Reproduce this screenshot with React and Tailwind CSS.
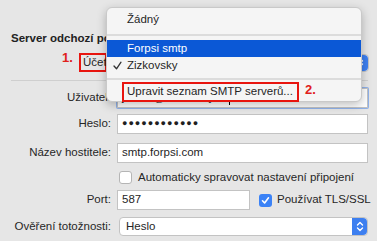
import React from "react";

const font = { fontFamily: '"Liberation Sans", Arial, sans-serif' };

const Label = ({ children }) => (
  <div className="w-[100px] shrink-0 text-right whitespace-nowrap">{children}</div>
);

const Field = ({ children, className = "" }) => (
  <div
    className={`h-[20px] border border-[#c3c3c3] bg-white px-[4px] flex items-center text-[#1f1f1f] whitespace-nowrap overflow-hidden ${className}`}
  >
    {children}
  </div>
);

const Chevron = () => (
  <svg width="8" height="11" viewBox="0 0 8 11" fill="none" stroke="white" strokeWidth="1.4" strokeLinecap="round" strokeLinejoin="round">
    <path d="M1.5 4 L4 1.5 L6.5 4" />
    <path d="M1.5 7 L4 9.5 L6.5 7" />
  </svg>
);

export default function App() {
  return (
    <div
      className="relative w-[377px] h-[241px] overflow-hidden bg-[#e6e6e6] text-[11.5px] text-[#262626]"
      style={font}
    >
      {/* form */}
      <div className="pl-[11px] pt-[31px]">
        <div className="font-bold text-[#222] leading-[14px]">Server odchozí pošty:</div>

        <div className="mt-[8px] flex items-center h-[19px]">
          <div className="w-[96px] shrink-0 flex justify-end">
            <span className="relative">
              <span className="absolute left-[-17px] top-[-5px] text-[13px] font-bold text-[#e0201b]">1.</span>
              <span className="border-2 border-[#e8150f] pl-[2px] inline-block h-[19px] leading-[15px] w-[28px] whitespace-nowrap">Účet:</span>
            </span>
          </div>
          <div className="ml-[10px] w-[252px] h-[18px] rounded-[4px] bg-white border border-[#c3c3c3] flex justify-end">
            <div className="w-[16px] h-full rounded-r-[4px] bg-[#3d7ff0] flex items-center justify-center">
              <Chevron />
            </div>
          </div>
        </div>

        <div className="mt-[8px] mr-[9px] h-px bg-[#cfcfcf]" />

        <div className="flex flex-col">
          <div className="mt-[6px] flex items-center">
            <Label>Uživatel:</Label>
            <div className="ml-[5px] w-[253px] rounded-[2px] p-[1px] bg-[#8fb1ea]">
              <Field className="border-[#9cb8e8]">
                <span>jmeno@zizkovsky.cz</span>
                <span className="ml-[1px] w-px h-[13px] bg-black" />
              </Field>
            </div>
          </div>

          <div className="mt-[5px] flex items-center">
            <Label>Heslo:</Label>
            <Field className="ml-[6px] w-[251px] tracking-[1px] text-[9px]">●●●●●●●●●●●●</Field>
          </div>

          <div className="mt-[9px] flex items-center">
            <Label>Název hostitele:</Label>
            <Field className="ml-[6px] w-[251px]">smtp.forpsi.com</Field>
          </div>

          <div className="mt-[8px] ml-[108px] flex items-center h-[13px]">
            <div className="w-[13px] h-[13px] rounded-[3px] border border-[#b5b5b5] bg-white" />
            <span className="ml-[6px] whitespace-nowrap">Automaticky spravovat nastavení připojení</span>
          </div>

          <div className="mt-[6px] flex items-center">
            <Label>Port:</Label>
            <Field className="ml-[6px] w-[133px]">587</Field>
            <div className="ml-[9px] w-[13px] h-[13px] rounded-[3px] bg-[#3b82f6] flex items-center justify-center">
              <svg width="9" height="9" viewBox="0 0 9 9" fill="none" stroke="white" strokeWidth="1.6" strokeLinecap="round" strokeLinejoin="round">
                <path d="M1.5 4.8 L3.6 7 L7.5 1.8" />
              </svg>
            </div>
            <span className="ml-[5px] whitespace-nowrap">Používat TLS/SSL</span>
          </div>

          <div className="mt-[7px] flex items-center">
            <Label>Ověření totožnosti:</Label>
            <div className="ml-[8px] w-[249px] h-[19px] rounded-[4px] bg-white border border-[#c3c3c3] flex items-center justify-between">
              <span className="pl-[6px]">Heslo</span>
              <div className="w-[15px] h-full rounded-r-[4px] bg-[#3d7ff0] flex items-center justify-center">
                <Chevron />
              </div>
            </div>
          </div>
        </div>
      </div>

      {/* popup menu */}
      <div className="absolute left-[106px] top-[7px] w-[256px] h-[95px] rounded-[6px] bg-[#f5f5f5] border border-[#c9c9c9] shadow-[0_3px_10px_rgba(0,0,0,0.25)] pt-[2px]">
        <div className="h-[20px] flex items-center pl-[20px]">Žádný</div>
        <div className="mt-[4px] h-[2px] bg-[#dcdcdc]" />
        <div className="mt-[4px] h-[17px] bg-[#0b58d6] text-white flex items-center pl-[20px]">Forpsi smtp</div>
        <div className="h-[17px] flex items-center">
          <span className="w-[20px] flex justify-center">
            <svg width="9" height="9" viewBox="0 0 9 9" fill="none" stroke="#333" strokeWidth="1.3" strokeLinecap="round" strokeLinejoin="round">
              <path d="M1 5 L3.5 7.8 L8 1.2" />
            </svg>
          </span>
          <span>Zizkovsky</span>
        </div>
        <div className="mt-[4px] h-[2px] bg-[#dcdcdc]" />
        <div className="mt-[2px] ml-[15px] w-[177px] h-[20px] border-2 border-[#e8150f] flex items-center pl-[3px] whitespace-nowrap overflow-hidden">
          Upravit seznam SMTP serverů...
        </div>
      </div>
      <div className="absolute left-[305px] top-[80px] text-[13px] font-bold text-[#e0201b]">2.</div>
    </div>
  );
}
